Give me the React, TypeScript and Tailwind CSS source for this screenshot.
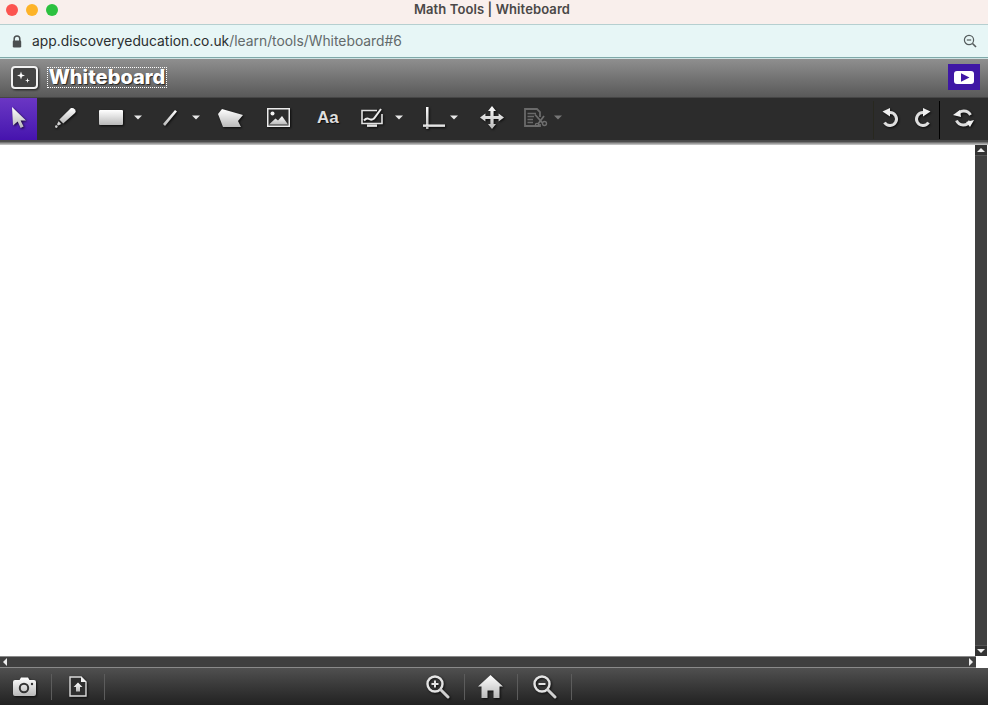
import React from "react";

const Defs = () => (
  <defs>
    <linearGradient id="g" x1="0" y1="0" x2="0" y2="1">
      <stop offset="0" stopColor="#ffffff" />
      <stop offset="1" stopColor="#b9b9b9" />
    </linearGradient>
  </defs>
);

function Icon({ w, h, className = "", children }: { w: number; h: number; className?: string; children: React.ReactNode }) {
  return (
    <svg width={w} height={h} viewBox={`0 0 ${w} ${h}`} className={`shrink-0 overflow-visible drop-shadow-[1px_1.5px_1px_rgba(0,0,0,0.75)] ${className}`}>
      <Defs />
      {children}
    </svg>
  );
}

const Caret = ({ className = "" }: { className?: string }) => (
  <svg width="8" height="5" viewBox="0 0 8 5" className={`shrink-0 ${className}`}>
    <path d="M0 0.5H8L4 4.5Z" fill="#e8e8e8" />
  </svg>
);

const Turn = () => (
  <>
    <path d="M7 4.5H8A6.5 6.5 0 1 1 2.5 14.5" fill="none" stroke="#dedede" strokeWidth="3" />
    <path d="M0.5 3.5L8 0V8.5Z" fill="#f0f0f0" />
  </>
);

export default function App() {
  return (
    <div className="flex h-[705px] w-[988px] flex-col overflow-hidden bg-white font-['Inter',sans-serif]">
      {/* window title */}
      <div className="relative flex h-[24px] shrink-0 items-center justify-center bg-[#f9efec]">
        <div className="absolute left-[6px] top-[4px] flex gap-[8px]">
          <span className="h-[12px] w-[12px] rounded-full bg-[#fc5450]" />
          <span className="h-[12px] w-[12px] rounded-full bg-[#fdb328]" />
          <span className="h-[12px] w-[12px] rounded-full bg-[#2cc13f]" />
        </div>
        <span className="mb-[5px] mr-[4px] text-[13px] font-semibold leading-none tracking-[0.1px] text-[#4a4847]">Math Tools | Whiteboard</span>
      </div>
      {/* url bar */}
      <div className="flex h-[34px] shrink-0 items-center border-y border-t-[#b6cfd0] border-b-[#7fa9a9] bg-[#e7f6f6] pl-[12px] pr-[11px] shadow-[0_1px_0_#cfe3e3]">
        <svg width="10" height="13" viewBox="0 0 10 13" className="shrink-0">
          <path d="M2.2 6V3.8a2.8 2.8 0 0 1 5.6 0V6" fill="none" stroke="#4b4f50" strokeWidth="1.5" />
          <rect x="0.8" y="5.5" width="8.4" height="7" rx="1.2" fill="#4b4f50" />
        </svg>
        <span className="ml-[10px] mt-[1px] text-[13.85px] leading-none text-[#2b2f30]">
          app.discoveryeducation.co.uk<span className="text-[#636a6b]">/learn/tools/Whiteboard#6</span>
        </span>
        <svg width="14" height="14" viewBox="0 0 14 14" className="ml-auto shrink-0">
          <circle cx="6" cy="6" r="4.6" fill="none" stroke="#555c5d" strokeWidth="1.2" />
          <path d="M3.8 6H8.2" stroke="#555c5d" strokeWidth="1.2" />
          <path d="M9.5 9.5L13 13" stroke="#555c5d" strokeWidth="1.6" />
        </svg>
      </div>
      {/* app header */}
      <div className="mt-px flex h-[38px] shrink-0 items-center bg-gradient-to-b from-[#8f8f8f] to-[#595959] pb-[2px] pl-[11px] pr-[8px]">
        <Icon w={27} h={23}>
          <rect x="1" y="1" width="25" height="21" rx="3" fill="#4a4a4a" fillOpacity="0.75" stroke="#f2f2f2" strokeWidth="2" />
          <path d="M10 5.5l1 3 3 1-3 1-1 3-1-3-3-1 3-1z" fill="#fff" />
          <path d="M16.5 12l.6 1.9 1.9.6-1.9.6-.6 1.9-.6-1.9-1.9-.6 1.9-.6z" fill="#fff" />
        </Icon>
        <div className="ml-[9px] flex h-[21px] w-[120px] items-center justify-center border border-dotted border-white">
          <span className="text-[20px] font-extrabold leading-none text-white [text-shadow:1px_1px_1px_rgba(0,0,0,0.65)]">Whiteboard</span>
        </div>
        <div className="ml-auto flex h-[26px] w-[32px] items-center justify-center bg-[#3f17a5]">
          <svg width="20" height="13" viewBox="0 0 20 13">
            <rect width="20" height="13" rx="3" fill="#fff" />
            <path d="M7 2.3L15.5 6.5L7 10.7Z" fill="#3f17a5" />
          </svg>
        </div>
      </div>
      {/* toolbar */}
      <div className="flex h-[44px] shrink-0 items-center border-y border-t-[#454545] border-b-[#4a4a4a] bg-[#2c2c2c] pb-[3px] pr-[14px]">
        <div className="-mb-[3px] flex w-[37px] items-center justify-center self-stretch bg-gradient-to-b from-[#6b36c4] to-[#4612ae] pb-[3px]">
          <Icon w={14} h={21}>
            <path d="M0 0L14 13.5H8.6L11.6 19.6L8.6 21L5.7 14.6L1 18.6Z" fill="url(#g)" />
          </Icon>
        </div>
        <Icon w={21} h={20} className="ml-[18px]">
          <path d="M15.5 0.6c1.2-.8 3-.6 4.2.6 1.1 1.1 1.2 2.7.3 3.8L8.2 15.6 4.4 11.6Z" fill="url(#g)" />
          <path d="M3.6 13.2l2.6 2.8-3 1.4-1.2-1.2Z" fill="#d5d5d5" />
          <circle cx="1.3" cy="18.6" r="1.3" fill="#cfcfcf" />
        </Icon>
        <Icon w={24} h={15} className="ml-[23px]">
          <rect width="24" height="15" rx="1" fill="url(#g)" />
        </Icon>
        <Caret className="ml-[11px]" />
        <Icon w={14} h={16} className="ml-[21px]">
          <path d="M0 14L12 0L14 1.6L2 16Z" fill="url(#g)" />
        </Icon>
        <Caret className="ml-[15px]" />
        <Icon w={25} h={18} className="ml-[18px]">
          <path d="M0 5L4 0L25 6L20 12L23 18H5Z" fill="url(#g)" />
        </Icon>
        <Icon w={23} h={19} className="ml-[24px]">
          <rect x="0.75" y="0.75" width="21.5" height="17.5" fill="#2c2c2c" stroke="#ececec" strokeWidth="1.5" />
          <circle cx="5.5" cy="5.5" r="2" fill="#f4f4f4" />
          <path d="M2 16.5L8.5 10.5L11 12.5L15 8L21 16.5Z" fill="url(#g)" />
        </Icon>
        <span className="ml-[27px] w-[21px] font-['Liberation_Sans',sans-serif] text-[17px] font-bold leading-none text-[#dedede] [text-shadow:1px_1px_1px_rgba(0,0,0,0.7)]">Aa</span>
        <Icon w={22} h={19} className="ml-[23px]">
          <path d="M16 2.5H1V15.5H21V6" fill="none" stroke="#e2e2e2" strokeWidth="1.6" />
          <path d="M3 12.5Q5.5 9.5 8 11T13 10.5L20 1" fill="none" stroke="#ececec" strokeWidth="2" />
          <rect x="6" y="16.5" width="10" height="2.5" fill="url(#g)" />
        </Icon>
        <Caret className="ml-[12px]" />
        <Icon w={22} h={22} className="ml-[20px]">
          <rect x="3" y="0" width="2.5" height="22" fill="url(#g)" />
          <rect x="0" y="17.5" width="22" height="2.5" fill="url(#g)" />
        </Icon>
        <Caret className="ml-[5px]" />
        <Icon w={24} h={23} className="ml-[22px]">
          <path d="M12 0L16 5H13.6V10H18.6V7.5L24 11.5L18.6 15.5V13H13.6V18H16L12 23L8 18H10.4V13H5.4V15.5L0 11.5L5.4 7.5V10H10.4V5H8Z" fill="url(#g)" />
        </Icon>
        <svg width="24" height="19" viewBox="0 0 24 19" className="ml-[20px] shrink-0">
          <path d="M16 16V18H1V1H13L16 4V9" fill="none" stroke="#6a6a6a" strokeWidth="1.8" />
          <path d="M3.5 5.5H12M3.5 8.5H10M3.5 11.5H9M3.5 14.5H9" stroke="#6a6a6a" strokeWidth="1.6" />
          <path d="M11 6.5L18.5 15M20 8L14 16" stroke="#6e6e6e" strokeWidth="1.8" />
          <circle cx="20.5" cy="15.5" r="2" fill="none" stroke="#6e6e6e" strokeWidth="1.4" />
          <circle cx="13" cy="17" r="1.6" fill="none" stroke="#6e6e6e" strokeWidth="1.4" />
        </svg>
        <Caret className="ml-[6px] opacity-40" />
        <div className="-mb-[2px] ml-auto mt-[3px] w-px self-stretch bg-[#28281f]" />
        <Icon w={17} h={19} className="ml-[8px]">
          <Turn />
        </Icon>
        <Icon w={17} h={19} className="ml-[15px]">
          <g transform="translate(17 0) scale(-1 1)">
            <Turn />
          </g>
        </Icon>
        <div className="-mb-[2px] ml-[8px] mt-[3px] w-px self-stretch bg-black" />
        <Icon w={21} h={20} className="ml-[13px]">
          <path d="M4 7.5A7.5 7.5 0 0 1 17.5 7" fill="none" stroke="#dedede" strokeWidth="3" />
          <path d="M0 7L7 2L8 9Z" fill="#f0f0f0" />
          <path d="M17 13A7.5 7.5 0 0 1 3.5 12.5" fill="none" stroke="#dedede" strokeWidth="3" />
          <path d="M21 12L13 14L17 19Z" fill="#f0f0f0" />
        </Icon>
      </div>
      <div className="h-[4px] shrink-0 bg-gradient-to-b from-[#3a3a3a] via-[#8a8a8a] to-[#d0d0d0]" />
      {/* canvas + vertical scrollbar */}
      <div className="flex min-h-0 flex-1 justify-end bg-white pr-px">
        <div className="flex w-[12px] flex-col justify-between bg-[#404040]">
          <div className="flex h-[11px] items-center justify-center border-b border-[#555] bg-[#333]">
            <svg width="8" height="4" viewBox="0 0 8 4"><path d="M4 0L8 4H0Z" fill="#eee" /></svg>
          </div>
          <div className="flex h-[11px] items-center justify-center border-t border-[#555] bg-[#333]">
            <svg width="8" height="4" viewBox="0 0 8 4"><path d="M0 0H8L4 4Z" fill="#eee" /></svg>
          </div>
        </div>
      </div>
      {/* horizontal scrollbar */}
      <div className="flex h-[12px] shrink-0 bg-white">
        <div className="flex w-[976px] items-center justify-between border-y border-[#8a8a8a] bg-[#3f3f3f] px-[3px]">
          <svg width="4" height="8" viewBox="0 0 4 8"><path d="M4 0V8L0 4Z" fill="#eee" /></svg>
          <svg width="4" height="8" viewBox="0 0 4 8"><path d="M0 0V8L4 4Z" fill="#eee" /></svg>
        </div>
      </div>
      {/* bottom bar */}
      <div className="flex h-[37px] shrink-0 items-center bg-gradient-to-b from-[#505050] to-[#222222]">
        <Icon w={23} h={19} className="ml-[13px]">
          <path d="M2 3H6.5L8 0.5H15L16.5 3H21A2 2 0 0 1 23 5V17A2 2 0 0 1 21 19H2A2 2 0 0 1 0 17V5A2 2 0 0 1 2 3Z" fill="url(#g)" />
          <circle cx="11" cy="11" r="4.2" fill="none" stroke="#333" strokeWidth="2" />
          <circle cx="19" cy="7" r="1.2" fill="#333" />
        </Icon>
        <div className="ml-[15px] h-[26px] w-px bg-[#5c5c5c]" />
        <Icon w={18} h={21} className="ml-[17px]">
          <path d="M1 1H12L17 6V20H1Z" fill="#2e2e2e" stroke="#dcdcdc" strokeWidth="1.4" />
          <path d="M12 0.5L17.5 6H12Z" fill="#f2f2f2" />
          <path d="M9 6.5L13.5 11H11V15.5H7V11H4.5Z" fill="url(#g)" />
        </Icon>
        <div className="ml-[17px] h-[26px] w-px bg-[#5c5c5c]" />
        <Icon w={23} h={23} className="ml-[321px]">
          <circle cx="9" cy="9" r="7.5" fill="none" stroke="#e4e4e4" strokeWidth="2.4" />
          <path d="M5.5 9H12.5M9 5.5V12.5" stroke="#e4e4e4" strokeWidth="2" />
          <path d="M15 15L22 22" stroke="#d0d0d0" strokeWidth="3" strokeLinecap="round" />
        </Icon>
        <div className="ml-[15px] h-[26px] w-px bg-[#5c5c5c]" />
        <Icon w={25} h={23} className="ml-[13px]">
          <path d="M12.5 0L25 11.5H21.5V23H15.5V15.5H9.5V23H3.5V11.5H0Z" fill="url(#g)" />
        </Icon>
        <div className="ml-[14px] h-[26px] w-px bg-[#5c5c5c]" />
        <Icon w={23} h={23} className="ml-[15px]">
          <circle cx="9" cy="9" r="7.5" fill="none" stroke="#e4e4e4" strokeWidth="2.4" />
          <path d="M5.5 9H12.5" stroke="#e4e4e4" strokeWidth="2" />
          <path d="M15 15L22 22" stroke="#d0d0d0" strokeWidth="3" strokeLinecap="round" />
        </Icon>
        <div className="ml-[15px] h-[26px] w-px bg-[#5c5c5c]" />
      </div>
    </div>
  );
}
